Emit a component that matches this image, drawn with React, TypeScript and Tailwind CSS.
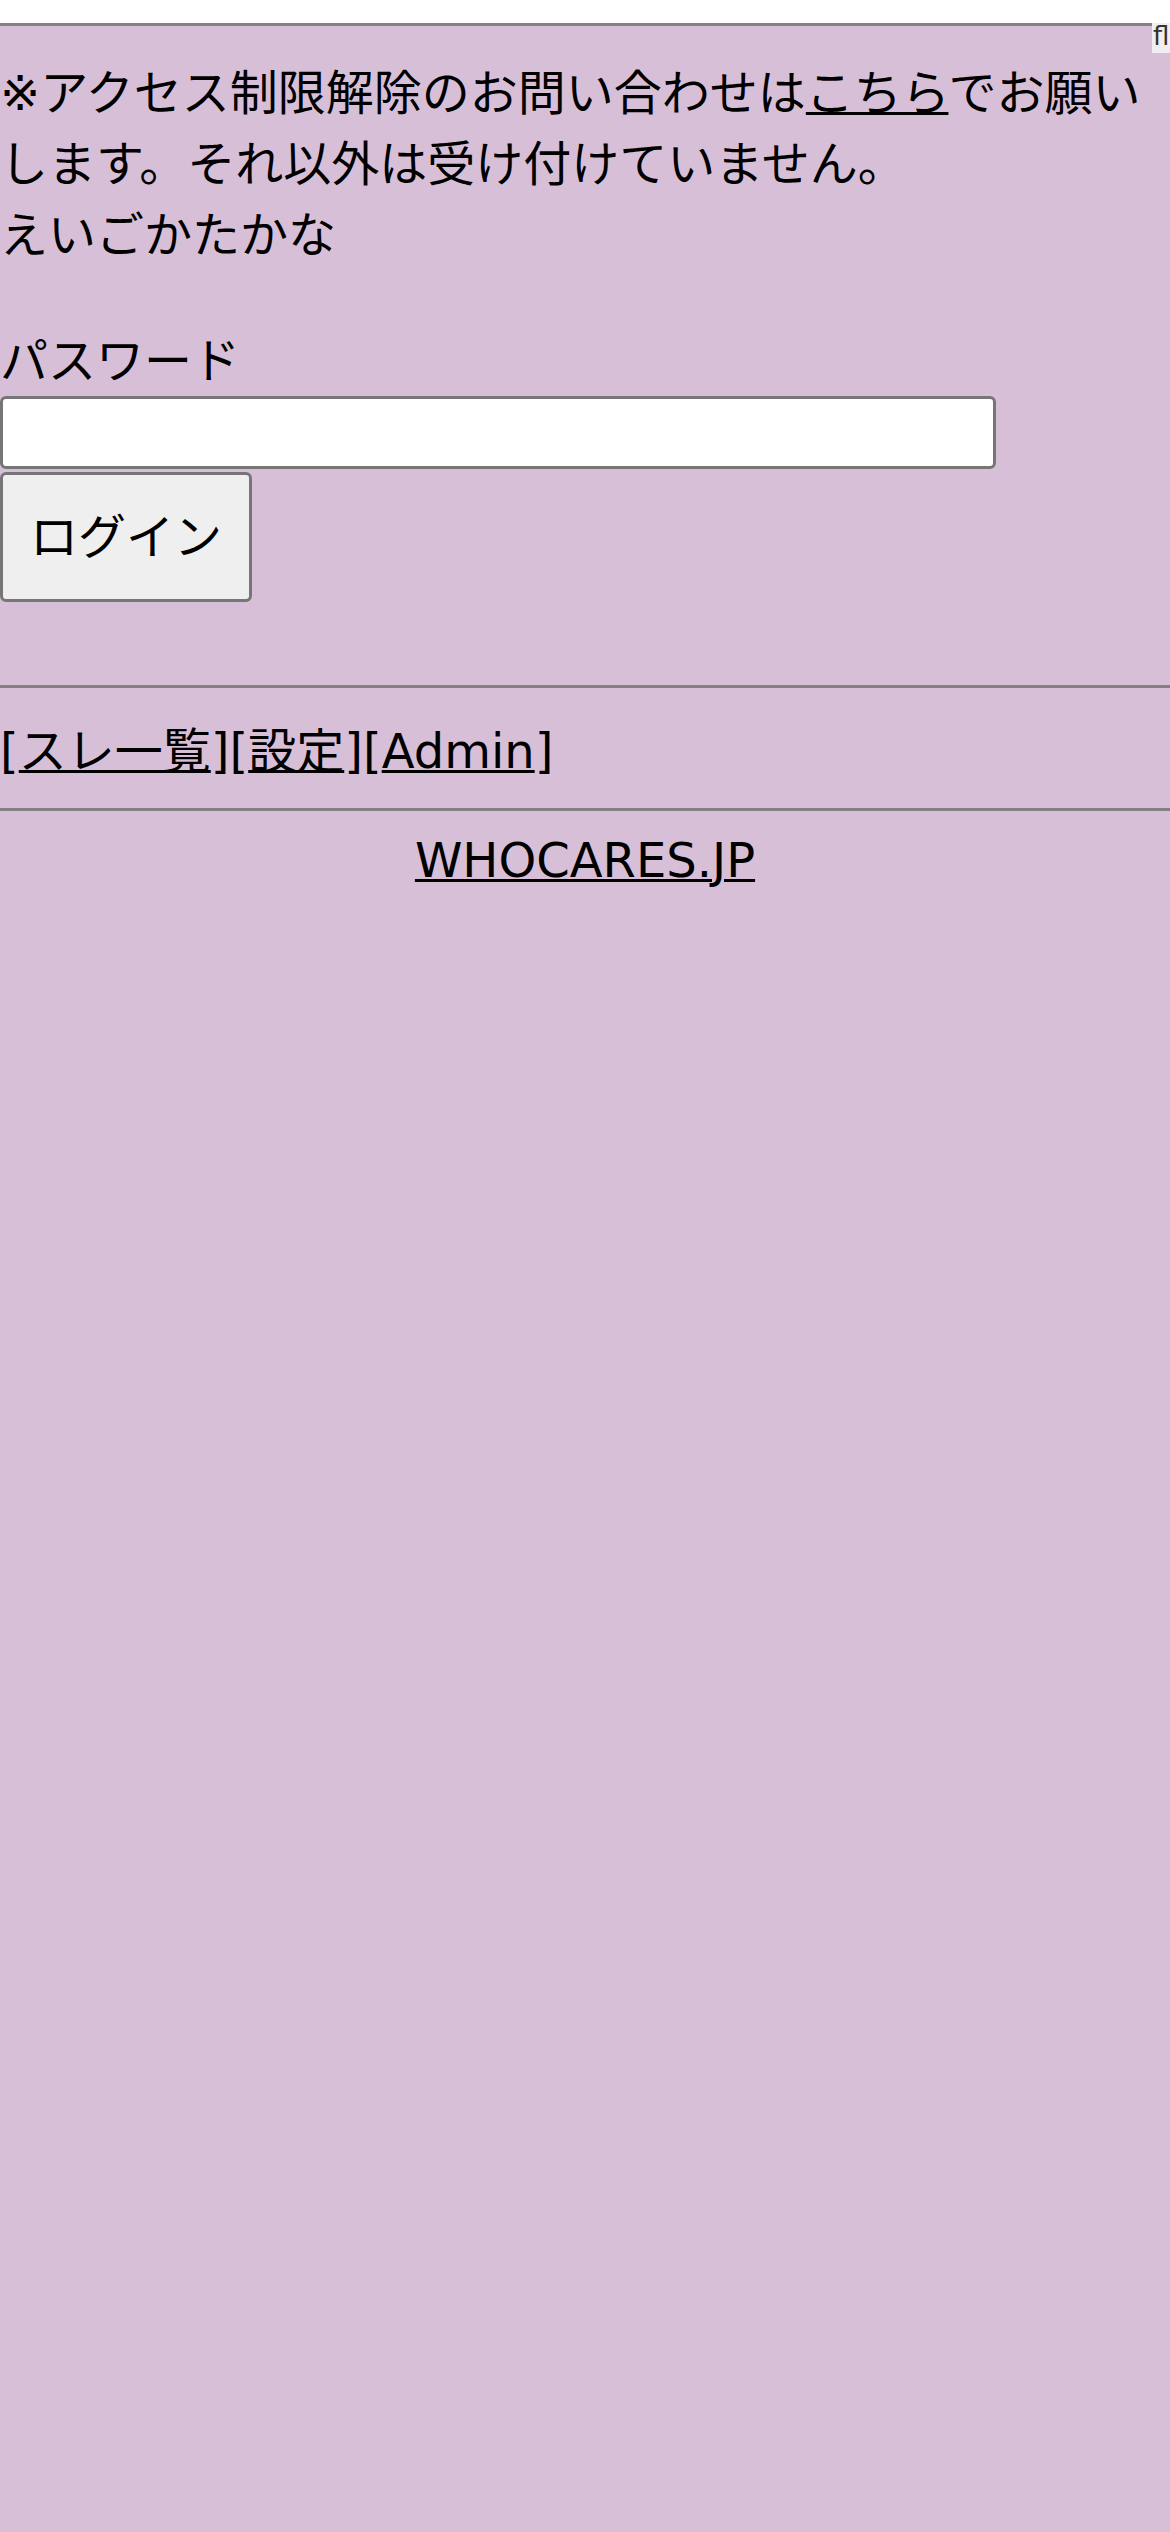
const font = "font-['DejaVu_Sans','Noto_Sans_CJK_JP',sans-serif]";

function Rule({ className = "" }: { className?: string }) {
  return <div className={`h-[3px] w-full bg-[#858085] ${className}`} />;
}

const navLinks = [
  { name: "スレ一覧", href: "#" },
  { name: "設定", href: "#" },
  { name: "Admin", href: "#" },
];

export default function App() {
  return (
    <div className={`relative min-h-screen bg-[#d8bfd8] text-black text-[48px] leading-[71px] ${font}`}>
      <div className="absolute right-0 top-0 h-[30px] w-[18px] overflow-hidden bg-[#f1eef1] pl-[1px] text-[26px] leading-[26px] text-[#333]">
        fl
      </div>

      <Rule className="mt-[23px]" />

      <p className="mt-[32px]">
        ※アクセス制限解除のお問い合わせは
        <a href="#" className="underline decoration-[3px]">
          こちら
        </a>
        でお願いします。それ以外は受け付けていません。
        <br />
        えいごかたかな
      </p>

      <form onSubmit={(e) => e.preventDefault()}>
        <div className="mt-[55px] leading-[70px]">パスワード</div>
        <input
          type="password"
          className="block h-[73px] w-[996px] rounded-[6px] border-[3px] border-[#767676] bg-white px-2 outline-none"
        />
        <button
          type="submit"
          className="mt-[3px] flex h-[130px] w-[252px] items-center justify-center rounded-[6px] border-[3px] border-[#767676] bg-[#efefef]"
        >
          ログイン
        </button>
      </form>

      <Rule className="mt-[83px]" />

      <nav className="flex h-[120px] items-center pt-[6px]">
        {navLinks.map((link) => (
          <span key={link.name}>
            [
            <a href={link.href} className="underline decoration-[3px]">
              {link.name}
            </a>
            ]
          </span>
        ))}
      </nav>

      <Rule />

      <div className="mt-[21px] flex justify-center leading-[56px]">
        <a href="#" className="underline decoration-[3px]">
          WHOCARES.JP
        </a>
      </div>
    </div>
  );
}
